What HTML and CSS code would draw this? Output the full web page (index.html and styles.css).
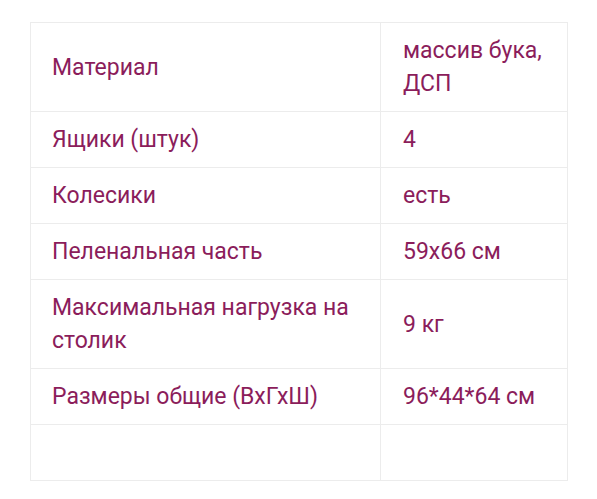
FILE: index.html
```html
<!DOCTYPE html>
<html lang="ru">
<head>
<meta charset="utf-8">
<title>Характеристики</title>
<link rel="stylesheet" href="styles.css">
</head>
<body>
<div class="wrap">
<table class="specs">
  <colgroup><col class="c-name"><col class="c-val"></colgroup>
  <tbody>
    <tr class="tall"><td>Материал</td><td>массив бука, ДСП</td></tr>
    <tr><td>Ящики (штук)</td><td>4</td></tr>
    <tr><td>Колесики</td><td>есть</td></tr>
    <tr><td>Пеленальная часть</td><td>59x66 см</td></tr>
    <tr><td>Максимальная нагрузка на столик</td><td>9 кг</td></tr>
    <tr><td>Размеры общие (ВхГхШ)</td><td>96*44*64 см</td></tr>
    <tr class="empty"><td></td><td></td></tr>
  </tbody>
</table>
</div>
</body>
</html>
```
FILE: styles.css
```css
html, body {
  margin: 0;
  padding: 0;
  background: #ffffff;
}
.wrap {
  padding: 22px 30px 0 30px;
}
.specs {
  width: 537px;
  border-collapse: collapse;
  table-layout: fixed;
  font-family: Roboto, "Liberation Sans", sans-serif;
  font-size: 23px;
  line-height: 33px;
  color: #8b1d5b;
}
.c-name { width: 350px; }
.c-val { width: 187px; }
.specs td {
  border: 1px solid #ececec;
  padding: 11px 21px 11px 21px;
  vertical-align: middle;
  text-align: left;
}
.specs td + td {
  padding-left: 22px;
}
.specs .empty td {
  height: 33px;
}
```
